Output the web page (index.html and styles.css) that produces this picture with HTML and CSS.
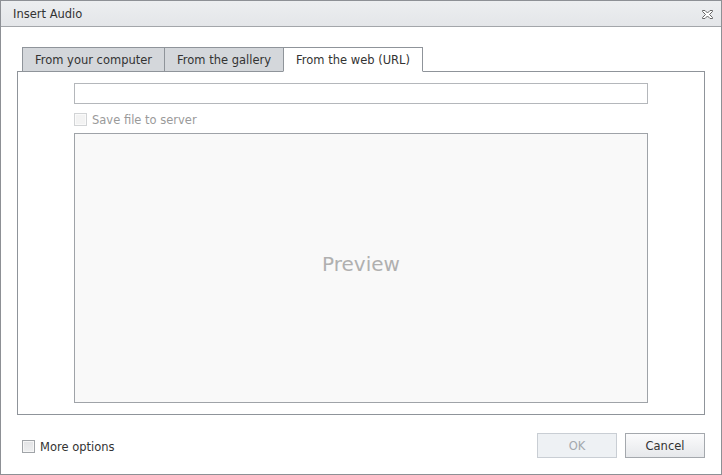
FILE: index.html
```html
<!DOCTYPE html>
<html>
<head>
<meta charset="utf-8">
<title>Insert Audio</title>
<link rel="stylesheet" href="styles.css">
</head>
<body>
<div class="dialog">
  <div class="titlebar">
    <span class="title">Insert Audio</span>
    <svg class="close" width="11" height="9" viewBox="0 0 11 9">
      <path d="M0.5 0.5 H3 L5.5 3 L8 0.5 H10.5 V1.5 L7.5 4.5 L10.5 7.5 V8.5 H8 L5.5 6 L3 8.5 H0.5 V7.5 L3.5 4.5 L0.5 1.5 Z" fill="#fff" stroke="#666" stroke-width="1" stroke-linejoin="miter"/>
    </svg>
  </div>
  <div class="content">
    <div class="tabstrip">
      <div class="tab-spacer"></div>
      <div class="tab tab-1">From your computer</div>
      <div class="tab tab-2">From the gallery</div>
      <div class="tab tab-3 selected">From the web (URL)</div>
      <div class="tab-fill"></div>
    </div>
    <div class="panel">
      <div class="url-input"></div>
      <label class="check-row disabled">
        <span class="checkbox"></span>
        <span class="check-label">Save file to server</span>
      </label>
      <div class="preview">Preview</div>
    </div>
  </div>
  <div class="footer">
    <label class="check-row">
      <span class="checkbox"></span>
      <span class="check-label">More options</span>
    </label>
    <div class="buttons">
      <div class="button disabled">OK</div>
      <div class="button">Cancel</div>
    </div>
  </div>
</div>
</body>
</html>
```
FILE: styles.css
```css
html, body {
  margin: 0;
  padding: 0;
  background: #fff;
}
body {
  font-family: "DejaVu Sans", Verdana, sans-serif;
  font-size: 11.5px;
  color: #333;
}
.dialog {
  width: 722px;
  height: 475px;
  box-sizing: border-box;
  border: 1px solid #8d9095;
  display: flex;
  flex-direction: column;
  background: #fff;
}
.titlebar {
  height: 26px;
  box-sizing: border-box;
  border-bottom: 1px solid #a3a6aa;
  background: linear-gradient(#eceef0, #e4e6e9);
  display: flex;
  align-items: center;
  justify-content: space-between;
  padding: 0 8px 0 12px;
}
.title {
  color: #333;
}
.close {
  display: block;
  margin-top: 1px;
}
.content {
  margin: 20px 16px 0 16px;
  display: flex;
  flex-direction: column;
}
.tabstrip {
  display: flex;
  height: 25px;
}
.tab-spacer {
  width: 5px;
  border-bottom: 1px solid #8f949a;
}
.tab-fill {
  flex: 1;
  border-bottom: 1px solid #8f949a;
}
.tab {
  box-sizing: border-box;
  height: 25px;
  border-top: 1px solid #8f949a;
  border-left: 1px solid #8f949a;
  border-bottom: 1px solid #8f949a;
  background: #d4d7db;
  display: flex;
  align-items: center;
  justify-content: center;
  color: #333;
  white-space: nowrap;
}
.tab-1 { width: 142px; }
.tab-2 { width: 119px; }
.tab-3 {
  width: 140px;
  border-right: 1px solid #8f949a;
}
.tab.selected {
  background: #fff;
  border-bottom-color: #fff;
}
.panel {
  border: 1px solid #8f949a;
  border-top: none;
  padding: 11px 56px 11px 56px;
  display: flex;
  flex-direction: column;
}
.url-input {
  height: 21px;
  box-sizing: border-box;
  border: 1px solid #b4b7bb;
  background: #fff;
}
.check-row {
  display: flex;
  align-items: center;
  height: 13px;
  gap: 5px;
}
.panel .check-row {
  margin-top: 9px;
  margin-bottom: 7px;
}
.checkbox {
  width: 13px;
  height: 13px;
  box-sizing: border-box;
  border: 1px solid #a0a4a8;
  background: linear-gradient(#e2e3e5, #eeeff0);
  box-shadow: inset 0 0 0 1px #f6f6f6;
  flex: none;
}
.check-row.disabled .checkbox {
  border-color: #d2d4d6;
  background: #f3f3f3;
  box-shadow: inset 0 0 0 1px #fafafa;
}
.check-label {
  color: #333;
  margin-top: 1px;
}
.check-row.disabled .check-label {
  color: #9a9a9a;
}
.preview {
  height: 270px;
  box-sizing: border-box;
  border: 1px solid #9fa3a8;
  background: #f9f9f9;
  display: flex;
  align-items: center;
  justify-content: center;
  font-size: 20px;
  color: #b0b0b0;
  padding-bottom: 8px;
}
.footer {
  display: flex;
  align-items: center;
  justify-content: space-between;
  margin: 18px 16px 0 21px;
}
.footer .check-row {
  margin-top: 1px;
}
.buttons {
  display: flex;
  gap: 8px;
}
.button {
  width: 80px;
  height: 25px;
  box-sizing: border-box;
  border: 1px solid #a4a8ad;
  background: linear-gradient(#fbfbfc, #e6e8eb);
  display: flex;
  align-items: center;
  justify-content: center;
  color: #333;
}
.button.disabled {
  border-color: #c9ced4;
  background: #eef1f4;
  color: #a3a8ae;
}
```
